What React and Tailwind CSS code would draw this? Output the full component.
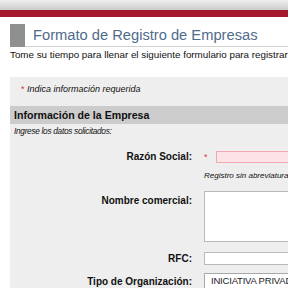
import React from 'react';

function Label({ children, className = '' }) {
  return (
    <div className={`text-right text-[10px] font-bold leading-[12px] text-[#111] whitespace-nowrap ${className}`}>
      {children}
    </div>
  );
}

export default function App() {
  return (
    <div className="w-[288px] h-[288px] overflow-hidden bg-white font-['Liberation_Sans',Arial,sans-serif] text-[#111]">
      {/* top bars */}
      <div className="h-[10px] bg-gradient-to-b from-[#efefef] to-[#cbcbcb]" />
      <div className="h-[7px] bg-[#a5182d]" />

      {/* title */}
      <div className="mt-[7px] ml-[10px] flex h-[23px]">
        <div className="w-[15px] bg-[#8d8f90]" />
        <div className="flex-1 border-b border-[#d2d2d2] pl-[8px] text-[14.7px] leading-[22px] text-[#4f6c8a] whitespace-nowrap">
          Formato de Registro de Empresas
        </div>
      </div>
      <p className="mt-[2px] ml-[10px] text-[9.8px] leading-[12px] whitespace-nowrap">
        Tome su tiempo para llenar el siguiente formulario para registrar
      </p>

      {/* form panel */}
      <div className="mt-[16px] ml-[10px] w-[400px] bg-[#eeeeee] pt-[6px] pb-[20px]">
        <p className="pl-[11px] text-[9px] italic leading-[12px]">
          <span className="text-[#e0324a] not-italic">*</span> Indica información requerida
        </p>

        <div className="mt-[11px] h-[18px] bg-[#cccccc] pl-[4px] text-[10.6px] font-bold leading-[18px]">
          Información de la Empresa
        </div>
        <p className="mt-[1px] pl-[4px] text-[8.3px] italic leading-[12px] tracking-[-0.3px]">Ingrese los datos solicitados:</p>

        <div className="mt-[14px] grid grid-cols-[182px_1fr] gap-x-[12px]">
          {/* Razón Social */}
          <Label className="self-center">Razón Social:</Label>
          <div className="flex items-center">
            <span className="w-[12px] text-[9px] leading-[12px] text-[#e0324a]">*</span>
            <div className="h-[12px] w-[160px] border border-[#f0a8b2] bg-[#fde2e6]" />
          </div>

          <div />
          <p className="mt-[7px] text-[8px] italic leading-[12px] whitespace-nowrap">Registro sin abreviaturas</p>

          {/* Nombre comercial */}
          <Label className="mt-[13px]">Nombre comercial:</Label>
          <div className="mt-[9px] h-[51px] w-[170px] border border-[#b9b9b9] bg-white" />

          {/* RFC */}
          <Label className="mt-[10px] self-center">RFC:</Label>
          <div className="mt-[10px] h-[13px] w-[170px] border border-[#b9b9b9] bg-white" />

          {/* Tipo de Organización */}
          <Label className="mt-[8px] self-center">Tipo de Organización:</Label>
          <div className="mt-[8px] flex h-[17px] w-[170px] items-center border border-[#a9a9a9] bg-white pl-[6px] text-[9.5px] tracking-[-0.2px] text-[#222] whitespace-nowrap">
            INICIATIVA PRIVADA
          </div>
        </div>
      </div>
    </div>
  );
}
